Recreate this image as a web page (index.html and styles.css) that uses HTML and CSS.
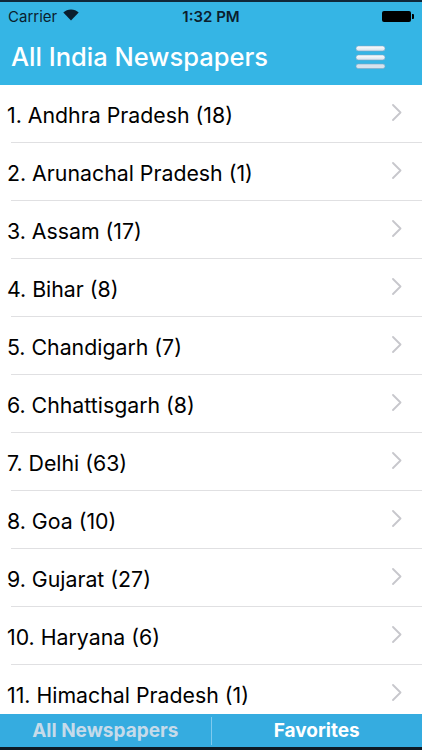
FILE: index.html
```html
<!DOCTYPE html>
<html>
<head>
<meta charset="utf-8" />
<title>All India Newspapers</title>
<link rel="stylesheet" href="styles.css">
</head>
<body>
<div class="phone">
	<div class="header">
		<div class="status">
			<span class="carrier">Carrier
				<svg class="wifi" width="16" height="12" viewBox="0 0 16 12">
					<path d="M8 11.5 L0.3 3.6 A11 11 0 0 1 15.7 3.6 Z" fill="#0b1e2e"/>
				</svg>
			</span>
			<span class="time">1:32 PM</span>
			<span class="battery"><i></i></span>
		</div>
		<div class="navbar">
			<h1>All India Newspapers</h1>
			<svg class="menu" width="31" height="24" viewBox="0 0 31 24">
				<defs>
					<linearGradient id="bar" x1="0" y1="0" x2="0" y2="1">
						<stop offset="0" stop-color="#ffffff"/>
						<stop offset="1" stop-color="#d3e2ee"/>
					</linearGradient>
				</defs>
				<rect x="1" y="1" width="29" height="5" rx="2.5" fill="url(#bar)" stroke="#7fa6c2" stroke-width="0.6"/>
				<rect x="1" y="10" width="29" height="5" rx="2.5" fill="url(#bar)" stroke="#7fa6c2" stroke-width="0.6"/>
				<rect x="1" y="19" width="29" height="4.5" rx="2.2" fill="#d6e3ee" stroke="#7fa6c2" stroke-width="0.6"/>
			</svg>
		</div>
	</div>

	<ul class="list">
		<li>1. Andhra Pradesh (18)<svg class="chev" width="10" height="17" viewBox="0 0 10 17"><polyline points="1,1 8.5,8.5 1,16" /></svg></li>
		<li>2. Arunachal Pradesh (1)<svg class="chev" width="10" height="17" viewBox="0 0 10 17"><polyline points="1,1 8.5,8.5 1,16" /></svg></li>
		<li>3. Assam (17)<svg class="chev" width="10" height="17" viewBox="0 0 10 17"><polyline points="1,1 8.5,8.5 1,16" /></svg></li>
		<li>4. Bihar (8)<svg class="chev" width="10" height="17" viewBox="0 0 10 17"><polyline points="1,1 8.5,8.5 1,16" /></svg></li>
		<li>5. Chandigarh (7)<svg class="chev" width="10" height="17" viewBox="0 0 10 17"><polyline points="1,1 8.5,8.5 1,16" /></svg></li>
		<li>6. Chhattisgarh (8)<svg class="chev" width="10" height="17" viewBox="0 0 10 17"><polyline points="1,1 8.5,8.5 1,16" /></svg></li>
		<li>7. Delhi (63)<svg class="chev" width="10" height="17" viewBox="0 0 10 17"><polyline points="1,1 8.5,8.5 1,16" /></svg></li>
		<li>8. Goa (10)<svg class="chev" width="10" height="17" viewBox="0 0 10 17"><polyline points="1,1 8.5,8.5 1,16" /></svg></li>
		<li>9. Gujarat (27)<svg class="chev" width="10" height="17" viewBox="0 0 10 17"><polyline points="1,1 8.5,8.5 1,16" /></svg></li>
		<li>10. Haryana (6)<svg class="chev" width="10" height="17" viewBox="0 0 10 17"><polyline points="1,1 8.5,8.5 1,16" /></svg></li>
		<li>11. Himachal Pradesh (1)<svg class="chev" width="10" height="17" viewBox="0 0 10 17"><polyline points="1,1 8.5,8.5 1,16" /></svg></li>
	</ul>

	<div class="tabbar">
		<span class="tab">All Newspapers</span>
		<span class="tab active">Favorites</span>
	</div>
</div>
</body>
</html>
```

FILE: styles.css
```css
*{ margin:0; padding:0; box-sizing:border-box;}
li{ list-style:none;}
body{ background:#fff; font-family:Inter, "Liberation Sans", Arial, sans-serif;}
.phone{ width:422px; height:750px; display:flex; flex-direction:column; overflow:hidden;}

.header{ background:#35b5e5; border-top:2px solid #10283a; height:85px; flex:none;}
.status{ height:28px; display:flex; align-items:center; justify-content:space-between; padding:0 8px; font-size:15px; color:#0b1e2e;}
.carrier{ display:flex; align-items:center; gap:6px; width:120px;}
.wifi{ margin-top:-2px;}
.time{ font-weight:600;}
.battery{ width:120px; display:flex; justify-content:flex-end; align-items:center;}
.battery i{ display:block; width:29px; height:11px; background:#000; border-radius:2px; position:relative; margin-right:3px;}
.battery i:after{ content:""; position:absolute; right:-3px; top:3px; width:2px; height:5px; background:#000; border-radius:0 1px 1px 0;}

.navbar{ height:55px; display:flex; align-items:center; justify-content:space-between; padding:0 36px 0 11px;}
.navbar h1{ font-size:25.5px; font-weight:500; color:#fff; margin-top:-2px;}
.menu{ margin-top:-1px;}

.list{ flex:1; overflow:hidden;}
.list li{ height:58px; display:flex; align-items:center; justify-content:space-between; padding:2px 20px 0 7px; font-size:21.3px; color:#000;
	background:linear-gradient(#e0e0e2,#e0e0e2) no-repeat right bottom / calc(100% - 11px) 1px;}
.chev{ margin-top:-5px;}
.chev polyline{ fill:none; stroke:#c7c7cc; stroke-width:1.8; stroke-linecap:round; stroke-linejoin:round;}

.tabbar{ height:36px; flex:none; background:#35ace0; border-bottom:3px solid #0d1a24; display:flex; align-items:center;}
.tab{ flex:1; text-align:center; font-size:19px; font-weight:bold; color:#c6dbea; line-height:28px;}
.tab.active{ color:#fff; border-left:1px solid #7fcaee;}
```
